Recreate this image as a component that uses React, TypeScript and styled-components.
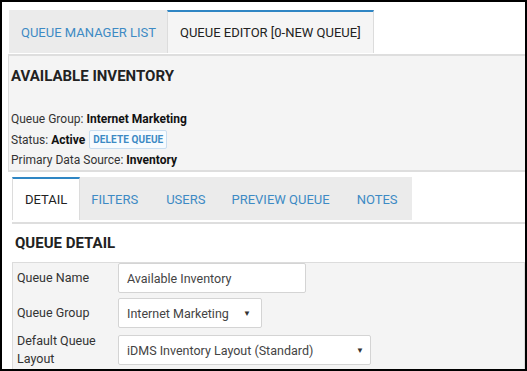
import styled, { createGlobalStyle } from "styled-components";

const GlobalStyle = createGlobalStyle`
  html, body {
    margin: 0;
    padding: 0;
    background: #ffffff;
  }
  * {
    box-sizing: border-box;
  }
`;

const Frame = styled.div`
  width: 527px;
  height: 371px;
  border: 2px solid #000;
  background: #fff;
  overflow: hidden;
  padding: 8px 0 0 6px;
  font-family: Roboto, "Liberation Sans", sans-serif;
  color: #333;
`;

const TabBar = styled.ul<{ $inset?: number }>`
  list-style: none;
  display: flex;
  margin: 0 0 0 ${(p) => p.$inset ?? 0}px;
  padding: 0;
  height: 43px;
`;

const Tab = styled.li<{ $active?: boolean; $activeBg?: string; $pad?: number; $right?: number }>`
  display: flex;
  align-items: center;
  padding: 0 ${(p) => p.$right ?? p.$pad ?? 12}px 0 ${(p) => p.$pad ?? 12}px;
  font-size: 13px;
  text-transform: uppercase;
  background: ${(p) => (p.$active ? p.$activeBg ?? "#f5f5f5" : "#ebebeb")};
  color: ${(p) => (p.$active ? "#222" : "#3d8ac4")};
  border-top: ${(p) => (p.$active ? "2px solid #2f86c4" : "2px solid transparent")};
  border-left: ${(p) => (p.$active ? "1px solid #dcdcdc" : "none")};
  border-right: ${(p) => (p.$active ? "1px solid #dcdcdc" : "none")};
  white-space: nowrap;
`;

const Rule = styled.div<{ $top: number }>`
  height: 2px;
  margin-top: ${(p) => p.$top}px;
  background: #dedede;
`;

const InfoPanel = styled.section`
  background: #f4f4f4;
  border-left: 1px solid #dcdcdc;
  border-bottom: 2px solid #dedede;
  padding: 11px 0 5px 2px;
  height: 116px;
`;

const Heading = styled.h2`
  margin: 0;
  font-size: 15px;
  font-weight: 700;
  color: #222;
  line-height: 18px;
`;

const InfoList = styled.div`
  margin-top: 24px;
  display: flex;
  flex-direction: column;
  font-size: 12px;
`;

const InfoLine = styled.div`
  display: flex;
  align-items: center;
  height: 20.5px;
  color: #333;

  b {
    font-weight: 700;
    margin-left: 3px;
    color: #111;
  }
`;

const SmallButton = styled.button`
  margin-left: 4px;
  height: 19px;
  padding: 0 3px;
  font-family: Roboto, "Liberation Sans", sans-serif;
  font-size: 10px;
  font-weight: 700;
  color: #3d8ac4;
  background: #f7fbfe;
  border: 1px solid #c9def0;
  border-radius: 2px;
  letter-spacing: 0.1px;
`;

const Body = styled.div`
  padding-left: 4px;
  margin-top: 5px;
`;

const SectionTitle = styled.div`
  padding: 10px 0 0 3px;
  height: 38px;
`;

const FormPanel = styled.div`
  background: #f4f4f4;
  border: 1px solid #dcdcdc;
  padding: 0 4px 6px 4px;
  height: 108px;
`;

const FormRow = styled.div<{ $gap?: number }>`
  display: grid;
  grid-template-columns: 101px auto;
  align-items: center;
  justify-content: start;
  margin-top: ${(p) => p.$gap ?? 0}px;
  font-size: 12.5px;
`;

const Label = styled.label`
  color: #333;
  line-height: 18px;
`;

const Field = styled.div<{ $w: number }>`
  width: ${(p) => p.$w}px;
  height: 30px;
  background: #fff;
  border: 1px solid #d4d4d4;
  border-radius: 2px;
  display: flex;
  align-items: center;
  justify-content: space-between;
  padding: 0 8px;
  font-size: 12.5px;
  color: #444;
`;

const Caret = styled.span<{ $shift?: number }>`
  font-size: 8px;
  color: #333;
  margin-right: ${(p) => p.$shift ?? 0}px;
`;

export default function App() {
  return (
    <>
      <GlobalStyle />
      <Frame>
        <TabBar $inset={1}>
          <Tab $pad={12} style={{ width: 158 }}>Queue Manager List</Tab>
          <Tab $active $pad={12} style={{ width: 207 }}>Queue Editor [0-New Queue]</Tab>
        </TabBar>
        <Rule $top={1} />
        <InfoPanel>
          <Heading>AVAILABLE INVENTORY</Heading>
          <InfoList>
            <InfoLine>
              Queue Group:<b>Internet Marketing</b>
            </InfoLine>
            <InfoLine>
              Status:<b>Active</b>
              <SmallButton>DELETE QUEUE</SmallButton>
            </InfoLine>
            <InfoLine>
              Primary Data Source:<b>Inventory</b>
            </InfoLine>
          </InfoList>
        </InfoPanel>
        <Body>
          <TabBar>
            <Tab $active $activeBg="#ffffff" $pad={12}>Detail</Tab>
            <Tab $pad={11} $right={15}>Filters</Tab>
            <Tab $pad={13}>Users</Tab>
            <Tab $pad={13}>Preview Queue</Tab>
            <Tab $pad={14}>Notes</Tab>
          </TabBar>
          <Rule $top={2} />
          <SectionTitle>
            <Heading>QUEUE DETAIL</Heading>
          </SectionTitle>
          <FormPanel>
            <FormRow>
              <Label>Queue Name</Label>
              <Field $w={188}>Available Inventory</Field>
            </FormRow>
            <FormRow $gap={5}>
              <Label>Queue Group</Label>
              <Field $w={144}>
                Internet Marketing <Caret $shift={2}>▼</Caret>
              </Field>
            </FormRow>
            <FormRow $gap={4}>
              <Label>
                Default Queue
                <br />
                Layout
              </Label>
              <Field $w={253}>
                iDMS Inventory Layout (Standard) <Caret $shift={-2}>▼</Caret>
              </Field>
            </FormRow>
          </FormPanel>
        </Body>
      </Frame>
    </>
  );
}
